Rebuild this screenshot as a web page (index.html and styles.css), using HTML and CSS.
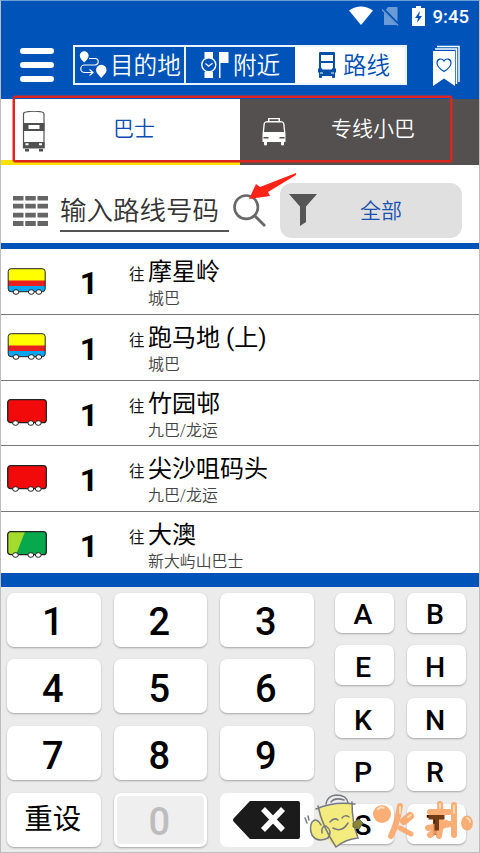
FILE: index.html
```html
<!DOCTYPE html>
<html lang="zh-CN">
<head>
<meta charset="utf-8">
<title>路线</title>
<link rel="stylesheet" href="styles.css">
</head>
<body>
<svg width="0" height="0" class="defs">
  <defs>
    <g id="wheels" fill="#fff" stroke="#222" stroke-width="1"><ellipse cx="9" cy="25" rx="2.9" ry="2.3"/><ellipse cx="24.3" cy="25" rx="2.9" ry="2.3"/><ellipse cx="31.8" cy="25" rx="2.9" ry="2.3"/></g>
    <symbol id="bus-yellow" viewBox="0 0 40 30">
      <clipPath id="yb"><rect x="1.2" y="1.7" width="37" height="23" rx="3"/></clipPath>
      <g clip-path="url(#yb)"><path fill="#ff0" d="M0 0h40v14H0z"/><path fill="#e82020" d="M0 13.5h40v5.5H0z"/><path fill="#08a5f3" d="M0 19h40v7H0z"/></g>
      <rect x="1.2" y="1.7" width="37" height="23" rx="3" fill="none" stroke="#222"/>
      <use href="#wheels"/>
    </symbol>
    <symbol id="bus-red" viewBox="0 0 40 30">
      <rect x=".7" y="1.7" width="38.6" height="23" rx="3" fill="#f20a0a" stroke="#222" stroke-width="1.3"/><use href="#wheels" x="-.5"/>
    </symbol>
    <symbol id="bus-green" viewBox="0 0 40 30">
      <rect x=".7" y="1.7" width="38.6" height="23" rx="3" fill="#07a94c"/>
      <path d="M3.5 1.7H18L9 24.700H3.500Q.7 24.700 .7 21.700V4.700Q.7 1.700 3.500 1.700z" fill="#a5dc2b"/>
      <rect x=".7" y="1.7" width="38.6" height="23" rx="3" fill="none" stroke="#222" stroke-width="1.3"/><use href="#wheels" x="-.5"/>
    </symbol>
  </defs>
</svg>
<div class="app">
  <header class="header">
    <div class="status">
      <svg width="24" height="20" viewBox="0 0 24 20"><path d="M0 4.500Q12-3.500 24 4.500L12 19z" fill="#fff"/></svg>
      <svg class="sim" width="18" height="19" viewBox="0 0 18 19"><path d="M6 0H15.500V18H2V5z" fill="#6c9ad5"/><path d="M1 2L17 18" stroke="#0054b9" stroke-width="3"/><path d="M0 2.500L16 18.500" stroke="#6c9ad5" stroke-width="1.400"/></svg>
      <svg class="battery" width="13" height="20" viewBox="0 0 13 20"><path d="M4 0h5v2h4v18H0V2h4z" fill="#fff"/><path d="M8 5L3 12h3l-1 5 5-7H7z" fill="#0054b9"/></svg>
      <span class="time">9:45</span>
    </div>
    <div class="topbar">
      <svg class="menu" width="34" height="34" viewBox="0 0 34 34"><path d="M3 3H31M3 17H31M3 31H31" stroke="#fff" stroke-width="6" stroke-linecap="round"/></svg>
      <nav class="modes">
        <a class="mode mode-dest">
          <svg width="28" height="28" viewBox="0 0 28 28"><path d="M5.200 11.500C2.500 8.500.8 7 .8 4.700a4.400 4.400 0 0 1 8.800 0C9.600 7 8 8.500 5.200 11.500zM22.300 27c-3-4-5.200-5-5.200-8a5.200 5.200 0 0 1 10.400 0c0 3-2.200 4-5.200 8z" fill="#fff"/><path d="M10 7.500H16a3 3 0 0 1 0 6.500H5.500a3.500 3.500 0 0 0 0 7.500H13M10.500 18.500L14 21.500L10.500 24.500" fill="none" stroke="#fff" stroke-width="1.200"/></svg>
          <span>目的地</span></a>
        <a class="mode mode-near">
          <svg width="28" height="28" viewBox="0 0 28 28"><path d="M3.500 1h8.500v6H3.500zM3.500 21h8.500v6H3.500z" fill="#fff"/><circle cx="7.800" cy="13.800" r="7" fill="#0054b9" stroke="#fff" stroke-width="1.400"/><path d="M4.500 12.500l3 2.800 4-3" fill="none" stroke="#fff" stroke-width="1.200"/><path d="M18 1h9.500v11h-8v15H18z" fill="#fff"/></svg>
          <span>附近</span></a>
        <a class="mode mode-route">
          <svg width="20" height="28" viewBox="0 0 20 28"><path d="M3 1h14q1 0 1 1v15l1 1v3l-1 1v4q0 1-1 1h-1q-1 0-1-1v-1H5v1q0 1-1 1H3q-1 0-1-1v-4l-1-1v-3l1-1V2q0-1 1-1z" fill="#0050a8"/><path d="M4 4h12v6H4zM4 12h12v4.500L14.500 18.500h-9L4 16.500z" fill="#fff"/><path d="M3 22h3M14 22h3" stroke="#fff"/></svg>
          <span>路线</span></a>
      </nav>
      <svg class="bookmark" width="29" height="42" viewBox="0 0 29 42"><path d="M5 1.500H27V37M3 4H24.500V39" fill="none" stroke="#fff" stroke-width="1.500"/><path d="M1 6H23V41L12 33.500L1 41z" fill="#fff"/><path d="M12 26.500C8 24 5 21.500 5 18c0-4 5-5.500 7-2 2-3.500 7-2 7 2 0 3.500-3 6-7 8.500z" fill="none" stroke="#0054b9" stroke-width="1.200"/></svg>
    </div>
  </header>

  <div class="tabs">
    <div class="tab active">
      <svg class="dd" width="24" height="42" viewBox="0 0 24 42"><path d="M4 1Q12-.5 20 1q2 .2 2 2V37H1.500V3Q1.500 1.200 4 1z" fill="#fff" stroke="#555" stroke-width="1.200"/><path d="M1 12h21.500v8H1zM1 31h21.500v6H1zM3 38h4v2.500H3zM17 38h4v2.500h-4z" fill="#505050"/><path d="M6.500 14h11v4h-11zM3.500 32.200h3v2h-3zM17 32.200h3v2h-3z" fill="#fff"/></svg>
      <span>巴士</span>
    </div>
    <div class="tab">
      <svg class="mini" width="24" height="30" viewBox="0 0 24 30"><path d="M6 1h12v3Q22 4 22.500 7l1 10v8H22v2.500q0 1-1.500 1t-1.500-1V25H5v2.500q0 1-1.500 1t-1.500-1V25H.5v-8l1-10Q2 4 6 4z" fill="#fff"/><path d="M7.500 2.200h9V4h-9zM4 5.500h16q1 0 1.200 2L22 15H2L2.800 7.500Q3 5.500 4 5.500zM1.500 20h5v1.500h-5zM17.500 20h5v1.500h-5z" fill="#53504f"/></svg>
      <span>专线小巴</span>
    </div>
    <div class="highlight"></div>
  </div>

  <div class="search">
    <svg class="grid" width="35" height="30" viewBox="0 0 35 30"><path d="M0 2.200H35M0 10.200H35M0 19.200H35M0 27.500H35" stroke="#666" stroke-width="4.800" stroke-dasharray="10.500 1.750"/></svg>
    <div class="field">输入路线号码</div>
    <svg class="lens" width="34" height="34" viewBox="0 0 34 34"><circle cx="13.200" cy="13.200" r="11.700" fill="none" stroke="#686868" stroke-width="2.600"/><path d="M21.500 21.500L32 32" stroke="#686868" stroke-width="2.800"/></svg>
    <div class="filter">
      <svg width="28" height="32" viewBox="0 0 28 32"><path d="M0 0H28L17 12.500V28L11 32V12.500z" fill="#555"/></svg>
      <span>全部</span>
    </div>
    <svg class="arrow" width="48" height="28" viewBox="0 0 48 28"><path d="M0 26L7 11L11 14L47 0V2L19 19L21 23z" fill="#ff2317"/></svg>
  </div>

  <main class="routes">
    <div class="route"><svg class="bus"><use href="#bus-yellow"/></svg><b>1</b><i>往</i><div class="dest"><strong>摩星岭</strong><small>城巴</small></div></div>
    <div class="route"><svg class="bus"><use href="#bus-yellow"/></svg><b>1</b><i>往</i><div class="dest"><strong>跑马地 (上)</strong><small>城巴</small></div></div>
    <div class="route"><svg class="bus"><use href="#bus-red"/></svg><b>1</b><i>往</i><div class="dest"><strong>竹园邨</strong><small>九巴/龙运</small></div></div>
    <div class="route"><svg class="bus"><use href="#bus-red"/></svg><b>1</b><i>往</i><div class="dest"><strong>尖沙咀码头</strong><small>九巴/龙运</small></div></div>
    <div class="route"><svg class="bus"><use href="#bus-green"/></svg><b>1</b><i>往</i><div class="dest"><strong>大澳</strong><small>新大屿山巴士</small></div></div>
  </main>

  <div class="keyboard">
    <div class="digits">
      <div class="key">1</div><div class="key">2</div><div class="key">3</div>
      <div class="key">4</div><div class="key">5</div><div class="key">6</div>
      <div class="key">7</div><div class="key">8</div><div class="key">9</div>
      <div class="key reset">重设</div><div class="key off">0</div>
      <div class="key back"><svg width="68" height="38" viewBox="0 0 68 38"><path d="M17 0H65q2 0 2 2V36q0 2-2 2H17L1 21q-2-2 0-4z" fill="#1b1b1b"/><path d="M30 8L50 29M50 8L30 29" stroke="#fff" stroke-width="5.500"/></svg></div>
    </div>
    <div class="letters">
      <div class="key">A</div><div class="key">B</div>
      <div class="key">E</div><div class="key">H</div>
      <div class="key">K</div><div class="key">N</div>
      <div class="key">P</div><div class="key">R</div>
      <div class="key">S</div><div class="key">T</div>
    </div>
    <div class="watermark">
      <svg width="62" height="58" viewBox="0 0 62 58">
        <path d="M14 17Q32 11 48 12Q48 30 53 45Q42 48 32 55Q26 51 22 45Q12 51 8 42Q4 32 11 27L17 33z" fill="#f3ea73" opacity=".92"/>
        <g fill="none" stroke="#77797f" stroke-width="1.500" stroke-linecap="round"><path d="M12 17Q30 9 51 12M14 14Q18 34 32 55Q42 47 54 46Q48 31 48 10M22 12Q23 4 32 3Q43 3 44 11M27 10Q31 5 40 8M17 33Q13 25 8 30Q5 36 8 43Q13 51 24 46Q29 39 22 34Q17 34 18 41M26 30Q30 25 34 28M38 26Q41 22 45 25M29 36Q38 41 44 31M1 26l2 5M4 24l1 4"/></g>
        <path d="M49 31l6-4 4 4-4 6-6-2z" fill="#88843b" stroke="#686a38"/>
      </svg>
      <svg class="brand" width="106" height="44" viewBox="0 0 106 44">
        <g fill="#fba668" fill-opacity=".9"><circle cx="12" cy="15" r="9"/><ellipse cx="97" cy="24" rx="6" ry="7.500"/></g>
        <g fill="none" stroke="#fba668" stroke-linecap="round" opacity=".9"><path d="M30 7Q27 25 21 37" stroke-width="6"/><path d="M40 17L34 22" stroke-width="8"/><path d="M30 29L41 35" stroke-width="5"/><path d="M60 13H79M58 29L80 25" stroke-width="6"/><path d="M70 5Q72 23 69 37M60 36L76 24" stroke-width="6"/><path d="M84 6V36" stroke-width="6"/></g>
        <g fill="none" stroke="#ffe0bf" stroke-width="1.800" stroke-linecap="round"><path d="M8 10q3-3 6-1M30 8v6M38 18l3-2M70 5v4M84 7v7M97 19q3 1 3 4"/></g>
        <path d="M58.500 16h16v4.500h-5.500v11h-4.500V20.500h-6z" fill="#733c14"/>
      </svg>
    </div>
  </div>
</div>
</body>
</html>
```
FILE: styles.css
```css
* { box-sizing: border-box; }
body { margin: 0; font-family: Roboto, "Noto Sans CJK SC", sans-serif; background: #fff; }
svg { display: block; flex: none; }
.defs { position: absolute; }
.app { width: 480px; height: 853px; display: flex; flex-direction: column; border: 1px solid #bdbdbd; border-top-color: #6fa0d8; overflow: hidden; }
.header { height: 98px; background: #0054b9; flex: none; color: #fff; }
.status { height: 44px; display: flex; align-items: flex-start; padding: 5px 10px 0 348px; }
.sim { margin: 1px 0 0 9px; }
.battery { margin-left: 12px; }
.time { margin-left: auto; font-size: 18.500px; line-height: 22px; font-weight: 500; }
.topbar { display: flex; padding-left: 19px; }
.menu { margin-top: 3px; }
.modes { display: flex; width: 334px; height: 40px; margin-left: 19px; border: 2px solid #e8f4ff; }
.mode { display: flex; align-items: center; font-size: 23.600px; line-height: 36px; font-weight: 350; white-space: nowrap; }
.mode span { position: relative; top: 1px; }
.mode-dest { width: 111px; padding-left: 4px; border-right: 2px solid #e8f4ff; gap: 3px; }
.mode-near { width: 109px; padding-left: 15px; gap: 4px; }
.mode-route { flex: 1; padding-left: 22px; gap: 6px; background: #fff; color: #0050b4; }
.bookmark { margin-left: 25px; }
.tabs { height: 66px; flex: none; display: flex; position: relative; }
.tab { flex: 1; display: flex; background: #53504f; color: #fff; font-size: 21px; line-height: 61px; font-weight: 350; }
.tab.active { background: #fff; color: #0b4cb5; border-bottom: 5px solid #ffe100; }
.dd { margin: 12px 0 0 21px; }
.mini { margin: 18px 0 0 22px; }
.tab span { margin-left: 45px; }
.tab.active span { margin-left: 67px; }
.highlight { position: absolute; left: 12px; top: -3px; width: 439px; height: 66px; border: 2px solid #dd251f; border-radius: 2px; box-shadow: 0 0 0 .5px #dd251f; }
.search { height: 84px; flex: none; border-bottom: 6px solid #0054b9; display: flex; position: relative; padding-left: 12px; }
.grid { margin-top: 31px; }
.field { margin: 23px 0 0 12px; width: 169px; height: 44px; border-bottom: 2px solid #555; font-size: 26.500px; font-weight: 350; line-height: 46px; color: #333; white-space: nowrap; }
.lens { margin: 29px 0 0 4px; }
.filter { margin: 18px 0 0 13px; width: 182px; height: 55px; border-radius: 12px; background: #e0e0e0; display: flex; font-size: 21px; font-weight: 350; line-height: 56px; color: #1650ae; }
.filter svg { margin: 11px 0 0 9px; }
.filter span { margin-left: 43px; }
.arrow { position: absolute; left: 248px; top: 8px; }
.routes { height: 323.500px; flex: none; }
.route { height: 65.800px; display: flex; align-items: flex-start; border-bottom: 1.500px solid #777; color: #111; }
.route:last-child { border: 0; }
.bus { width: 40px; height: 30px; margin: 17.500px 0 0 6px; }
.route b { width: 40px; text-align: center; margin: 16px 0 0 22px; font-size: 32px; line-height: 36px; font-weight: 700; color: #000; }
.route i { font-style: normal; font-size: 15.500px; line-height: 20px; margin: 16px 0 0 20px; width: 19px; }
.dest { display: flex; flex-direction: column; }
.dest strong { font-size: 24px; font-weight: 400; line-height: 30px; margin-top: 8px; color: #000; }
.dest small { font-size: 15.900px; font-weight: 350; line-height: 24px; color: #444; }
.keyboard { flex: 1; background: #ebebeb; border-top: 14px solid #0054b9; padding: 6px 0 0 6px; display: flex; gap: 21px; position: relative; }
.digits { display: grid; grid-template-columns: repeat(3, 93.500px); grid-auto-rows: 54px; gap: 12.800px 13px; height: 254px; }
.letters { display: grid; grid-template-columns: repeat(2, 59px); grid-auto-rows: 40px; gap: 12.900px 13px; height: 252px; }
.key { background: #fff; border-radius: 7px; box-shadow: 0 1px 2px rgba(0,0,0,.3); display: flex; align-items: center; justify-content: center; font-size: 38px; font-weight: 500; color: #000; line-height: 1; padding: 5px 2px 0 0; }
.letters .key { font-size: 28.500px; }
.key.reset { font-size: 28.500px; font-weight: 400; padding: 0 2px 0 0; }
.key.off { background: #efefef; border: 3px solid #fff; color: #bdbdbd; }
.key.back { padding: 0; box-shadow: none; }
.watermark { position: absolute; left: 303px; top: 205px; display: flex; }
.brand { margin: 7px 0 0 4px; }
```
